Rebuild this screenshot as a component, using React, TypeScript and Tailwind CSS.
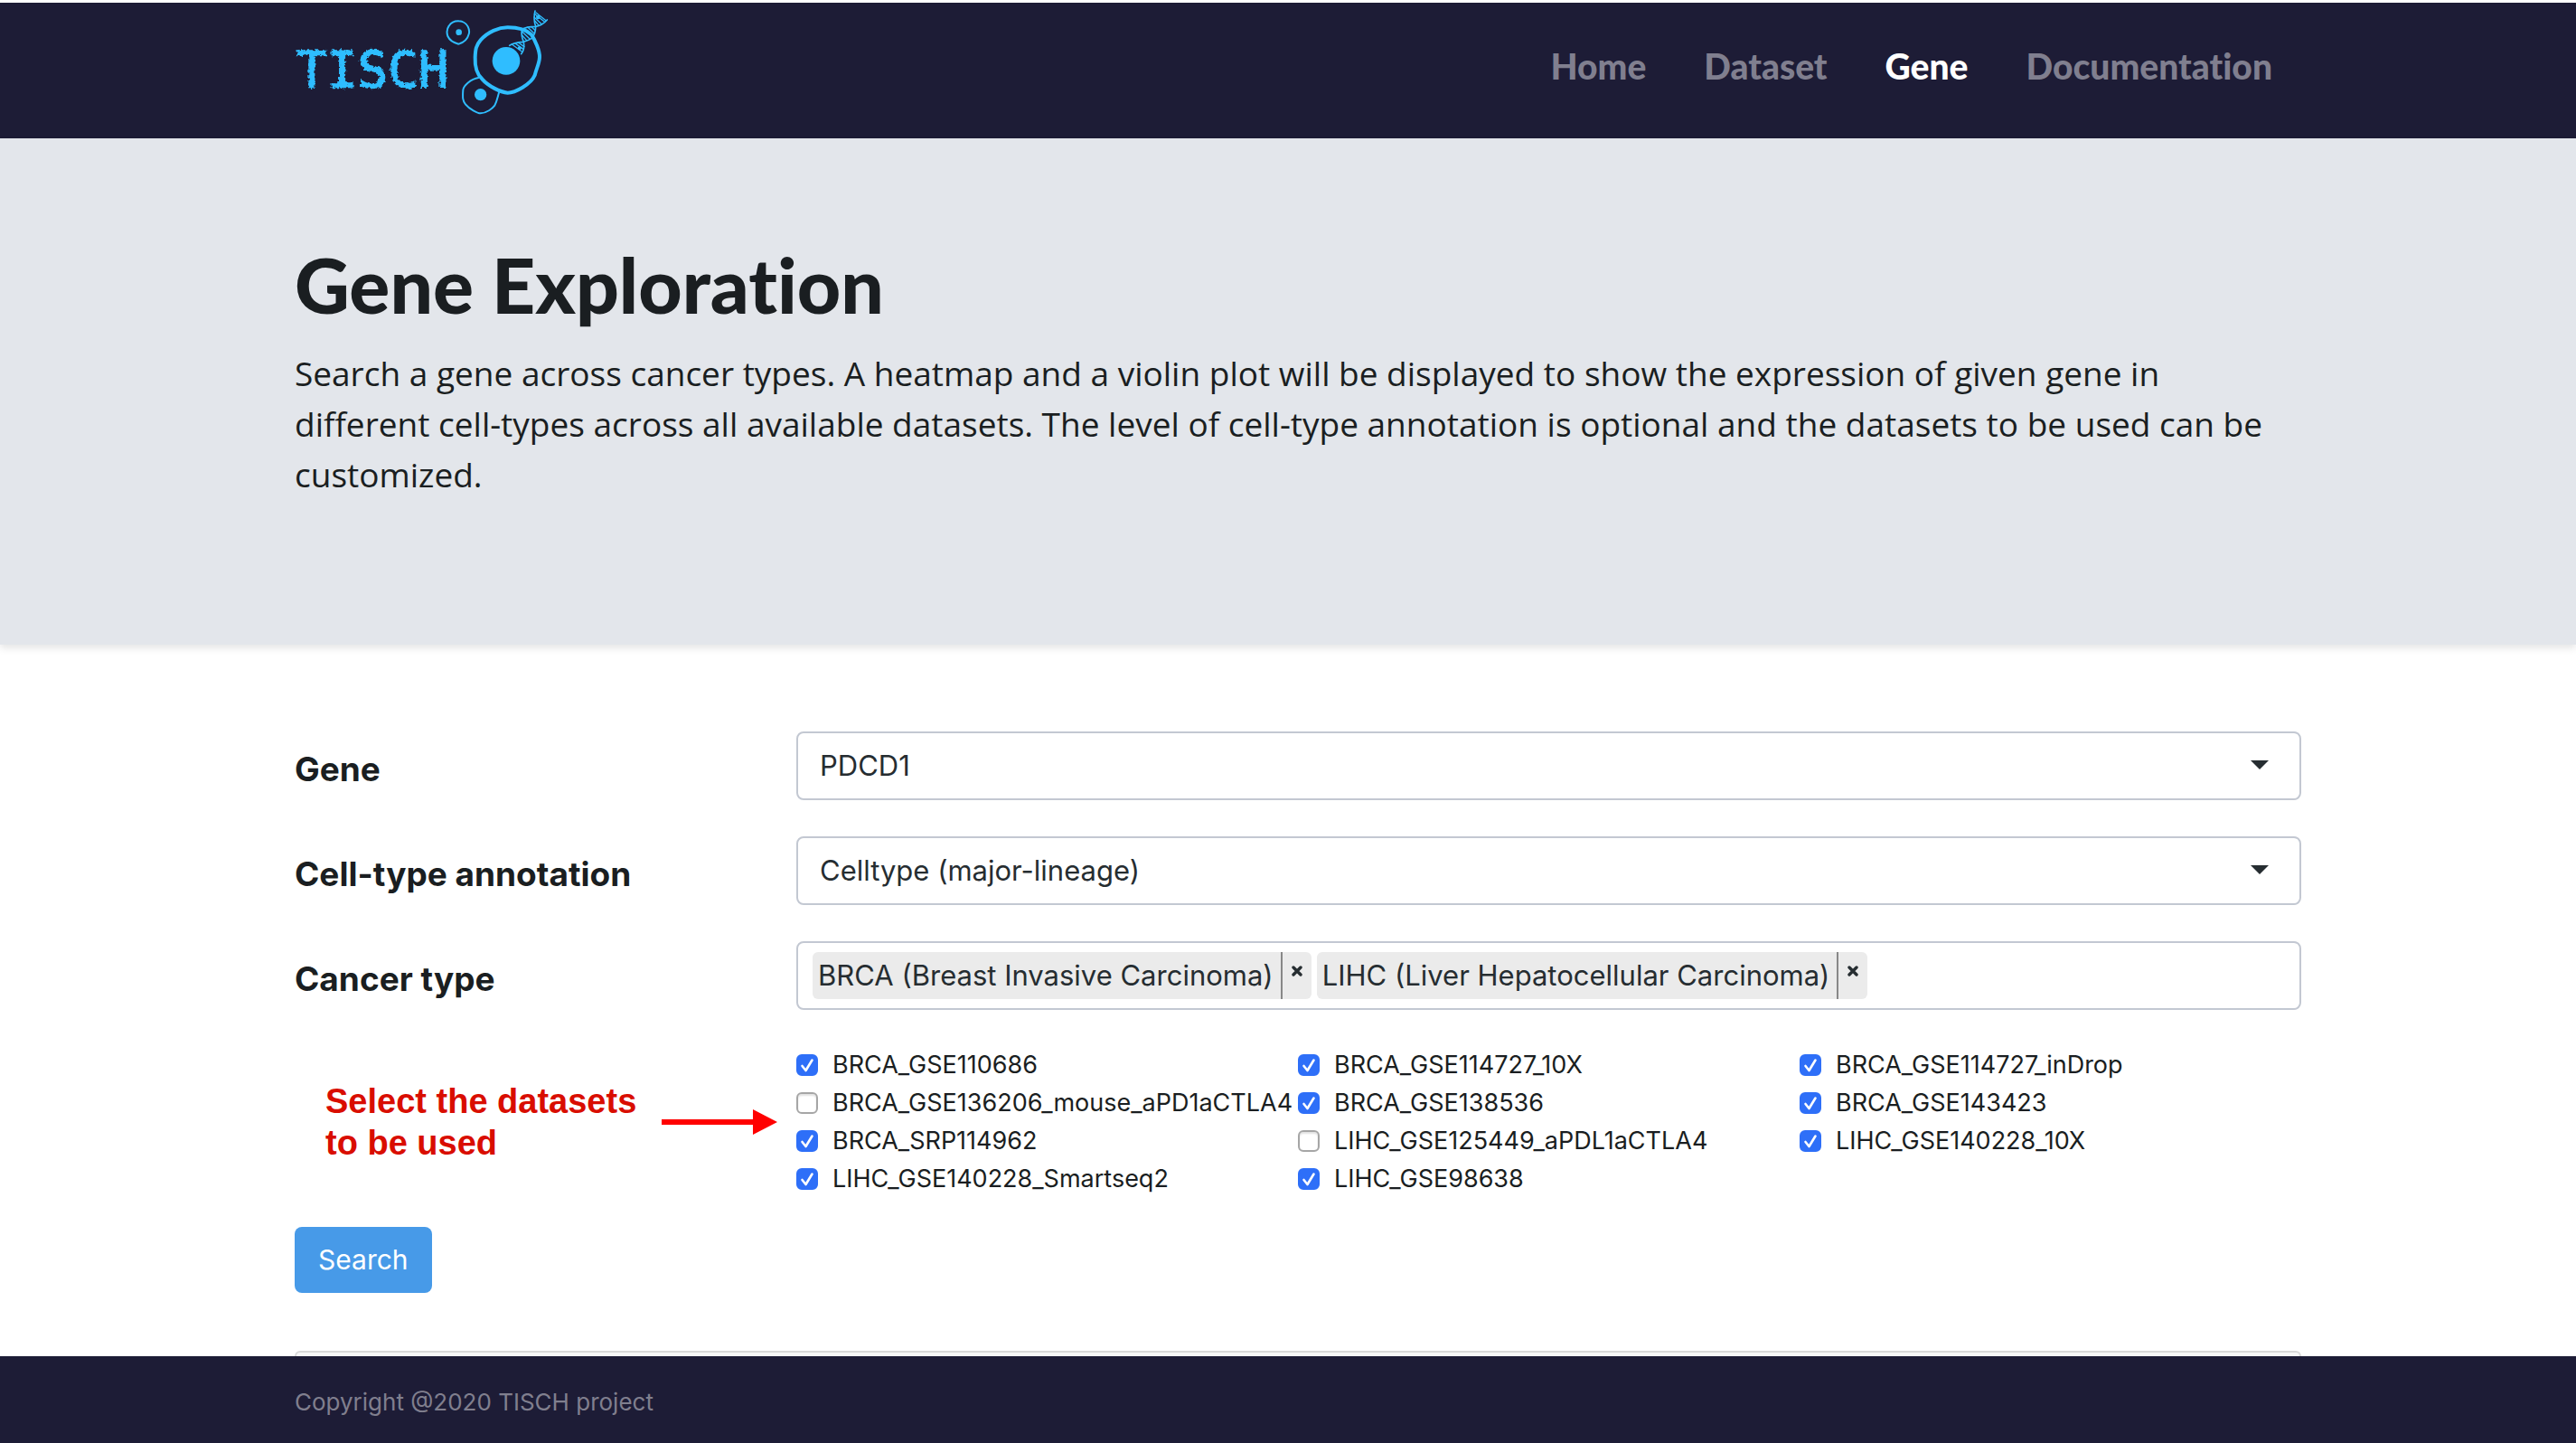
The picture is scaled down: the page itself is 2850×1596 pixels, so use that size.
import { useState } from "react";

const navItems = ["Home", "Dataset", "Gene", "Documentation"];

const cancerTypes = [
  "BRCA (Breast Invasive Carcinoma)",
  "LIHC (Liver Hepatocellular Carcinoma)",
];

const datasets: { name: string; checked: boolean }[] = [
  { name: "BRCA_GSE110686", checked: true },
  { name: "BRCA_GSE114727_10X", checked: true },
  { name: "BRCA_GSE114727_inDrop", checked: true },
  { name: "BRCA_GSE136206_mouse_aPD1aCTLA4", checked: false },
  { name: "BRCA_GSE138536", checked: true },
  { name: "BRCA_GSE143423", checked: true },
  { name: "BRCA_SRP114962", checked: true },
  { name: "LIHC_GSE125449_aPDL1aCTLA4", checked: false },
  { name: "LIHC_GSE140228_10X", checked: true },
  { name: "LIHC_GSE140228_Smartseq2", checked: true },
  { name: "LIHC_GSE98638", checked: true },
];

function Logo() {
  return (
    <svg
      viewBox="326 3 284 130"
      className="h-[130px] w-[284px]"
      role="img"
      aria-label="TISCH"
    >
      <defs>
        <filter id="chalk" x="-5%" y="-15%" width="110%" height="130%">
          <feTurbulence type="fractalNoise" baseFrequency="0.3" numOctaves="2" seed="4" result="n" />
          <feDisplacementMap in="SourceGraphic" in2="n" scale="6" xChannelSelector="R" yChannelSelector="G" />
        </filter>
      </defs>
      <text
        x="328"
        y="96"
        fill="#2fbdff"
        stroke="#2fbdff"
        strokeWidth="1.5"
        filter="url(#chalk)"
        className="font-['DejaVu_Sans_Mono',monospace] text-[56px]"
      >
        TISCH
      </text>
      <g transform="translate(480 0) scale(0.3333)" fill="none" stroke="#2fbdff" strokeLinecap="round" strokeLinejoin="round">
        <path
          strokeWidth="6"
          d="M81 70C95 70 108 78 113 88C119 100 119 107 115 116C111 132 97 141 82 146C66 142 52 133 46 120C42 108 43 96 50 86C57 75 68 70 81 70Z"
        />
        <circle cx="83" cy="107" r="10" fill="#2fbdff" stroke="none" />
        <path
          strokeWidth="12"
          d="M245 91C275 91 305 97 324 115C335 132 352 168 351 190C350 212 340 228 335 250C322 280 270 308 245 308C220 306 180 285 160 262C142 245 136 215 137 190C138 165 140 150 155 133C180 105 215 91 245 91Z"
        />
        <circle cx="240" cy="202" r="46" fill="#2fbdff" stroke="none" />
        <path
          strokeWidth="6"
          d="M148 258C122 262 99 285 97 298C95 325 96 336 105 346C118 362 145 376 155 376C175 375 194 361 202 350C210 334 212 320 216 308"
        />
        <circle cx="155" cy="314" r="20" fill="#2fbdff" stroke="none" />
        <g strokeWidth="5">
          <path d="M336 36C331 58 333 74 338 88C338 106 334 118 325 127C316 133 306 136 298 139C282 140 262 142 251 151" />
          <path d="M376 66C364 80 352 86 338 88C318 88 304 90 292 98C290 114 293 128 298 139C301 154 299 168 290 179" />
        </g>
        <g strokeWidth="4">
          <path d="M334 46L368 73M333 57L358 80M335 69L349 85M339 42L372 68" />
          <path d="M300 94L329 122M312 91L334 112M324 89L337 101M293 105L319 130M294 118L308 134" />
          <path d="M259 147L293 172M269 143L298 164M280 141L300 155" />
        </g>
        <circle cx="346" cy="57" r="7" fill="#2fbdff" stroke="none" />
        <circle cx="284" cy="160" r="6" fill="#2fbdff" stroke="none" />
      </g>
    </svg>
  );
}

function SelectRow({ id, label, value }: { id: string; label: string; value: string }) {
  return (
    <div className="grid grid-cols-4 items-center">
      <label htmlFor={id} className="pt-2 text-[37px] leading-11 font-bold text-[#1a1e21]">
        {label}
      </label>
      <div className="relative col-span-3">
        <select
          id={id}
          className="block h-[76px] w-full appearance-none rounded-lg border-2 border-[#c3c8d2] bg-white px-6 text-[31px] text-[#262d31]"
        >
          <option>{value}</option>
        </select>
        <svg viewBox="0 0 20 10" className="pointer-events-none absolute top-8 right-9 h-[10px] w-5">
          <path d="M0 0H20L10 10Z" fill="#262d31" />
        </svg>
      </div>
    </div>
  );
}

function DatasetOption({ name, checked }: { name: string; checked: boolean }) {
  const [on, setOn] = useState(checked);
  return (
    <label className="flex h-[42px] items-center gap-4 text-[27px] whitespace-nowrap text-[#1a1e21]">
      <span className="relative block size-6 shrink-0">
        <input
          type="checkbox"
          checked={on}
          onChange={() => setOn(!on)}
          className="block size-6 appearance-none rounded-md border-2 border-[#a6a6a6] bg-white shadow-[inset_0_2px_2px_#e2e2e2] checked:border-[#2e6ff8] checked:bg-[#2e6ff8] checked:shadow-none"
        />
        {on && (
          <svg viewBox="0 0 24 24" className="pointer-events-none absolute inset-0 size-6">
            <path
              d="M6.5 13L10.5 18L17.5 6.5"
              fill="none"
              stroke="#fff"
              strokeWidth="2.6"
              strokeLinecap="round"
              strokeLinejoin="round"
            />
          </svg>
        )}
      </span>
      {name}
    </label>
  );
}

export default function App() {
  return (
    <div className="flex min-h-screen flex-col bg-white font-['Inter',sans-serif]">
      <header className="flex h-[153px] items-start justify-between border-t-3 border-white bg-[#1d1c36] pr-[336px] pl-[326px]">
        <a href="#home" className="block">
          <Logo />
        </a>
        <nav className="flex gap-16 pt-[46px] font-['Lato',sans-serif] text-[39px] leading-12 font-black [font-variant-ligatures:none]">
          {navItems.map((item) => (
            <a key={item} href={"#" + item} className={item === "Gene" ? "text-white" : "text-[#807f8f]"}>
              {item}
            </a>
          ))}
        </nav>
      </header>

      <section className="bg-[#e3e6eb] pt-[114px] pr-[304px] pb-40 pl-[326px] text-[#1a1e21] shadow-[0_4px_8px_rgba(0,0,0,0.1)]">
        <h1 className="font-['Lato',sans-serif] text-[84px] leading-24 font-black [font-variant-ligatures:none]">
          Gene Exploration
        </h1>
        <p className="mt-[22px] font-['Open_Sans',sans-serif] text-[37px] leading-14 font-medium">
          Search a gene across cancer types. A heatmap and a violin plot will be displayed to show the expression of
          given gene in <br />
          different cell-types across all available datasets. The level of cell-type annotation is optional and the
          datasets to be used can be customized.
        </p>
      </section>

      <main className="flex flex-1 flex-col pt-24 pr-[304px] pl-[326px]">
        <form className="flex flex-col gap-10" onSubmit={(e) => e.preventDefault()}>
          <SelectRow id="gene" label="Gene" value="PDCD1" />
          <SelectRow id="celltype" label="Cell-type annotation" value="Celltype (major-lineage)" />

          <div className="grid grid-cols-4 items-center">
            <label htmlFor="cancer" className="pt-2 text-[37px] leading-11 font-bold text-[#1a1e21]">
              Cancer type
            </label>
            <div className="col-span-3 flex h-[76px] items-center gap-1.5 rounded-lg border-2 border-[#c3c8d2] bg-white px-4 text-[31px] text-[#262d31]">
              {cancerTypes.map((type) => (
                <span key={type} className="flex h-[52px] items-center rounded-md bg-[#ebebeb] pl-1.5 whitespace-nowrap">
                  {type}
                  <button
                    type="button"
                    aria-label={"Remove " + type}
                    className="ml-2 flex h-full w-[34px] items-center justify-center border-l-2 border-[#888888] pb-2.5"
                  >
                    <svg viewBox="0 0 12 12" className="size-3">
                      <path d="M2 2L10 10M10 2L2 10" stroke="#262d31" strokeWidth="3.4" strokeLinecap="round" />
                    </svg>
                  </button>
                </span>
              ))}
              <input id="cancer" type="text" className="h-full min-w-0 flex-1 outline-none" />
            </div>
          </div>

          <div className="grid grid-cols-4">
            <div className="flex items-center pl-[34px]">
              <p className="w-[372px] font-['Liberation_Sans',sans-serif] text-[38px] leading-[46px] font-bold text-[#d90d00]">
                Select the datasets
                <br />
                to be used
              </p>
              <svg viewBox="0 0 128 28" className="h-7 w-32">
                <path d="M0 11H101V0L128 14L101 28V17H0Z" fill="#ff0000" />
              </svg>
            </div>
            <fieldset className="col-span-3 grid grid-cols-3" aria-label="Datasets">
              {datasets.map((d) => (
                <DatasetOption key={d.name} name={d.name} checked={d.checked} />
              ))}
            </fieldset>
          </div>

          <button
            type="submit"
            className="-mt-2 h-[73px] self-start rounded-lg bg-[#479ae8] px-[26px] text-[30px] text-white"
          >
            Search
          </button>
        </form>

        <div className="mt-16 flex-1 rounded-t-lg border-2 border-b-0 border-[#d9d9d9] bg-[#f7f7f7]" />
      </main>

      <footer className="flex h-24 items-center bg-[#1d1c36] pt-1 pl-[326px] text-[26px] text-[#807f8e]">
        Copyright @2020 TISCH project
      </footer>
    </div>
  );
}
